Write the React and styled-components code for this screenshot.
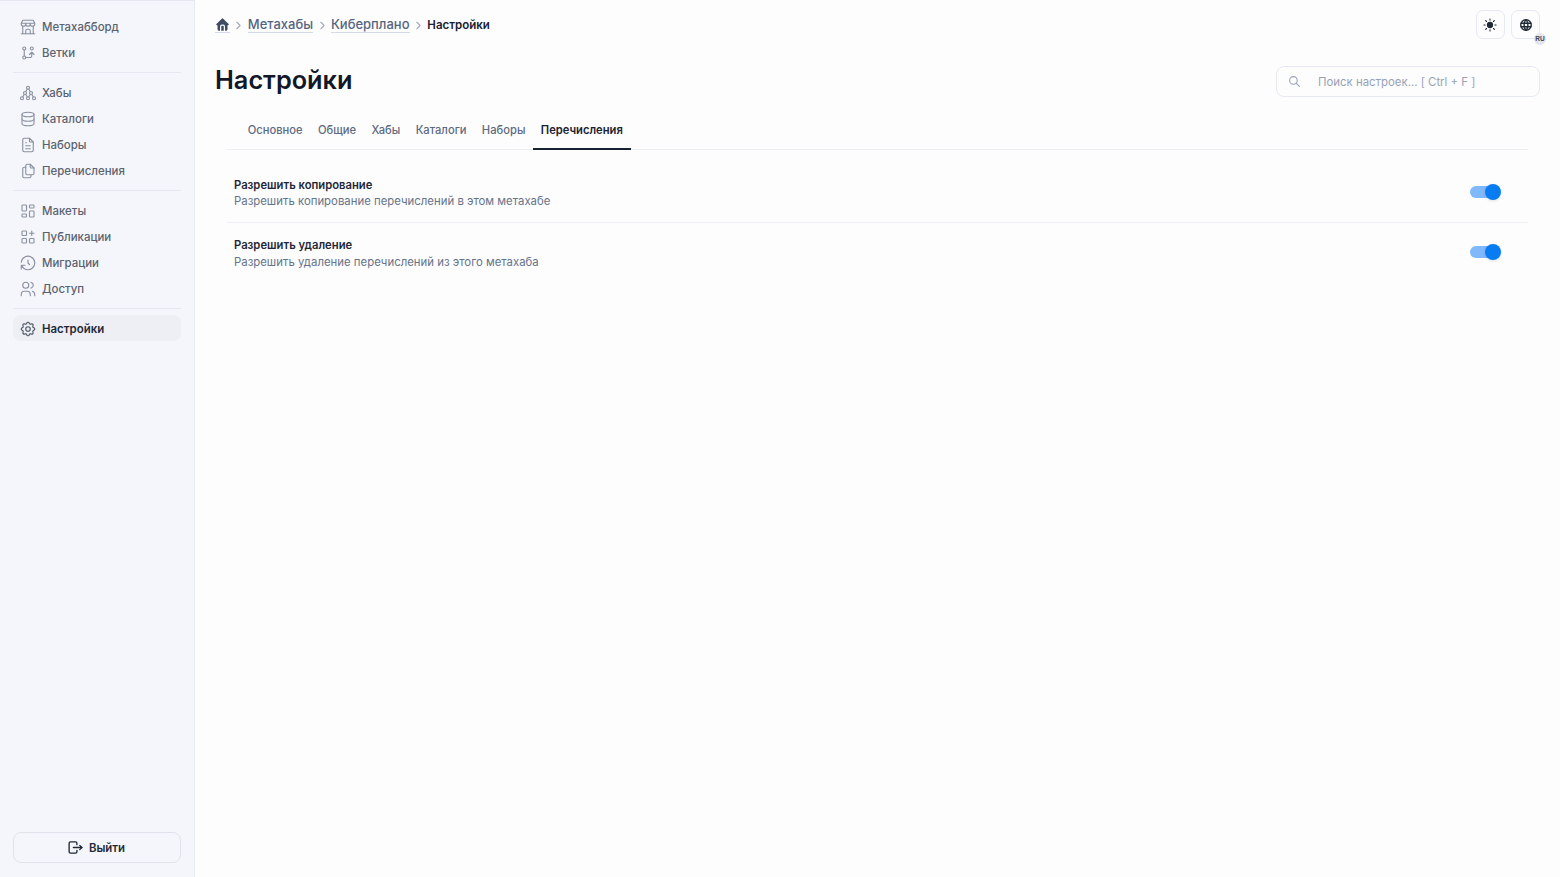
import React from "react";
import styled, { createGlobalStyle } from "styled-components";
import {
  TbBuildingStore, TbGitBranch, TbHierarchy3, TbDatabase, TbFileText, TbFiles,
  TbLayoutDashboard, TbApps, TbHistory, TbUsers, TbSettings, TbLogout,
  TbWorld, TbSearch, TbChevronRight, TbHomeFilled,
} from "react-icons/tb";

const Global = createGlobalStyle`
  *, *::before, *::after { box-sizing: border-box; }
  html, body { margin: 0; height: 100%; background: #fdfdfe; }
  body { font-family: Inter, "Noto Sans", sans-serif; -webkit-font-smoothing: antialiased; }
  #root { height: 100%; }
`;

const Shell = styled.div`display: flex; width: 1560px; height: 877px; overflow: hidden;`;

const Sidebar = styled.aside`
  width: 195px; flex: none; height: 100%; background: #f5f6fb;
  border-right: 1px solid #e6e9f2; border-top: 1px solid #e6e9f2;
  padding: 12px 13px 14px; display: flex; flex-direction: column;
`;
const NavList = styled.nav`display: flex; flex-direction: column; flex: 1;`;
const NavItem = styled.a`
  display: flex; align-items: center; gap: 5px; height: 26px; padding: 1px 6px 0; border-radius: 8px;
  font-size: 11.45px; font-weight: ${p => (p.$active ? 600 : 500)};
  color: ${p => (p.$active ? "#1f2937" : "#5b6270")};
  background: ${p => (p.$active ? "#edeff5" : "transparent")};
  svg { width: 18px; height: 18px; color: ${p => (p.$active ? "#4b5563" : "#8a91a0")}; stroke-width: 1.5; flex: none; }
`;
const NavDivider = styled.div`height: 1px; background: #e5e8f0; margin: 7px 0 6px;`;
const LogoutButton = styled.button`
  height: 31px; display: flex; align-items: center; justify-content: center; gap: 5px;
  border: 1px solid #e0e3ec; border-radius: 8px; background: transparent; color: #1f2937;
  font: 600 11.4px Inter, sans-serif; padding: 0 2px 0 0;
  svg { width: 17px; height: 17px; stroke-width: 1.9; }
`;

const Main = styled.main`flex: 1; min-width: 0; padding: 10px 20px 0 20px;`;
const TopBar = styled.div`display: flex; justify-content: space-between; align-items: flex-start; height: 29px;`;
const Breadcrumbs = styled.div`display: flex; align-items: center; height: 29px; padding-top: 1px; gap: 2.4px;`;
const Crumb = styled.a`
  color: #56657f; font-weight: 500; font-size: 13px; line-height: 15px;
  border-bottom: 1px solid #d5dbe6; display: flex; align-items: center;
  svg { width: 15px; height: 15px; color: #3d4b63; }
`;
const CrumbCurrent = styled.span`color: #1a2130; font-weight: 600; font-size: 11.5px;`;
const Chevron = styled(TbChevronRight)`width: 13px; height: 13px; color: #a3aab7; stroke-width: 2;`;
const TopActions = styled.div`display: flex; gap: 6.5px;`;
const IconButton = styled.button`
  position: relative; width: 29px; height: 29px; padding: 0; border: 1px solid #e6e9f2; border-radius: 7px;
  background: #fdfdfe; color: #1f2937; display: flex; align-items: center; justify-content: center;
  svg { width: 14px; height: 14px; }
`;
const GlobeIcon = styled(TbWorld)`stroke-width: 2.4;`;
const Badge = styled.span`
  position: absolute; right: -7px; bottom: -7px; width: 12px; height: 12px; border-radius: 50%;
  background: #e3e6ee; color: #3b4454; font-size: 6.5px; font-weight: 700; line-height: 12px; text-align: center;
`;

const Header = styled.div`display: flex; justify-content: space-between; align-items: center; margin-top: 23px; height: 36px;`;
const Title = styled.h1`margin: 0; font-size: 25.3px; line-height: 36px; font-weight: 600; color: #111827;`;
const Search = styled.label`
  width: 264px; height: 31px; margin-top: 3px; border: 1px solid #e6e9f2; border-radius: 8px; display: flex; align-items: center;
  padding-left: 11px; gap: 17px; color: #98a2b6;
  svg { width: 13px; height: 13px; flex: none; }
`;
const SearchInput = styled.input`
  border: none; outline: none; background: transparent; flex: 1; min-width: 0; padding: 0; font: 400 11.4px Inter, sans-serif; color: #374151;
  &::placeholder { color: #98a2b6; opacity: 1; }
`;

const Content = styled.section`margin: 0 12px;`;
const Tabs = styled.div`display: flex; padding-left: 13px; margin-top: 13px; border-bottom: 1px solid #eceef4; height: 39px;`;
const Tab = styled.button`
  height: 39px; padding: 1px 7.7px 0; border: none; background: transparent; margin-bottom: -1px;
  font: ${p => (p.$active ? 600 : 500)} 11.2px Inter, sans-serif;
  color: ${p => (p.$active ? "#1a2130" : "#5d6a80")};
  border-bottom: 2px solid ${p => (p.$active ? "#1a2130" : "transparent")};
`;
const Row = styled.div`
  display: flex; align-items: center; justify-content: space-between; padding: ${p => p.$top}px 28px 0 7px;
  height: ${p => p.$h}px; border-bottom: ${p => (p.$line ? "1px solid #eff1f6" : "none")};
`;
const RowText = styled.div`display: flex; flex-direction: column; gap: ${p => p.$gap}px;`;
const RowTitle = styled.div`font-size: 11.25px; line-height: 16px; font-weight: 600; color: #1f2735;`;
const RowDesc = styled.div`font-size: 11.38px; line-height: 16px; font-weight: 400; color: #66738a;`;
const Switch = styled.span`position: relative; width: 30px; height: 12px; border-radius: 6px; background: #7fb8fb; margin-bottom: 3px;`;
const Knob = styled.span`
  position: absolute; right: -1px; top: -2px; width: 16px; height: 16px; border-radius: 50%; background: #0a7cf2;
  box-shadow: 0 1px 3px rgba(16,24,40,.12);
`;

const SunIcon = () => (
  <svg viewBox="0 0 24 24" fill="none" stroke="currentColor" strokeWidth="1.9" strokeLinecap="round">
    <circle cx="12" cy="12" r="5.4" fill="currentColor" stroke="none" />
    <path d="M12 1.6v2M12 20.4v2M1.6 12h2M20.4 12h2M4.6 4.6l1.4 1.4M18 18l1.4 1.4M4.6 19.4l1.4-1.4M18 6l1.4-1.4" />
  </svg>
);

const groups = [
  [["Метахабборд", TbBuildingStore], ["Ветки", TbGitBranch]],
  [["Хабы", TbHierarchy3], ["Каталоги", TbDatabase], ["Наборы", TbFileText], ["Перечисления", TbFiles]],
  [["Макеты", TbLayoutDashboard], ["Публикации", TbApps], ["Миграции", TbHistory], ["Доступ", TbUsers]],
  [["Настройки", TbSettings, true]],
];
const tabs = ["Основное", "Общие", "Хабы", "Каталоги", "Наборы", "Перечисления"];

export default function App() {
  return (
    <Shell>
      <Global />
      <Sidebar>
        <NavList>
          {groups.map((g, i) => (
            <React.Fragment key={i}>
              {i > 0 && <NavDivider />}
              {g.map(([label, Icon, active]) => (
                <NavItem key={label} $active={active}><Icon />{label}</NavItem>
              ))}
            </React.Fragment>
          ))}
        </NavList>
        <LogoutButton><TbLogout />Выйти</LogoutButton>
      </Sidebar>
      <Main>
        <TopBar>
          <Breadcrumbs>
            <Crumb><TbHomeFilled /></Crumb>
            <Chevron />
            <Crumb>Метахабы</Crumb>
            <Chevron />
            <Crumb>Киберплано</Crumb>
            <Chevron />
            <CrumbCurrent>Настройки</CrumbCurrent>
          </Breadcrumbs>
          <TopActions>
            <IconButton><SunIcon /></IconButton>
            <IconButton><GlobeIcon /><Badge>RU</Badge></IconButton>
          </TopActions>
        </TopBar>
        <Header>
          <Title>Настройки</Title>
          <Search><TbSearch /><SearchInput placeholder="Поиск настроек... [ Ctrl + F ]" /></Search>
        </Header>
        <Content>
          <Tabs>
            {tabs.map(t => <Tab key={t} $active={t === "Перечисления"}>{t}</Tab>)}
          </Tabs>
          <Row $h={73} $top={14} $line>
            <RowText $gap={0.5}>
              <RowTitle>Разрешить копирование</RowTitle>
              <RowDesc>Разрешить копирование перечислений в этом метахабе</RowDesc>
            </RowText>
            <Switch><Knob /></Switch>
          </Row>
          <Row $h={60} $top={1}>
            <RowText $gap={1}>
              <RowTitle>Разрешить удаление</RowTitle>
              <RowDesc>Разрешить удаление перечислений из этого метахаба</RowDesc>
            </RowText>
            <Switch><Knob /></Switch>
          </Row>
        </Content>
      </Main>
    </Shell>
  );
}
